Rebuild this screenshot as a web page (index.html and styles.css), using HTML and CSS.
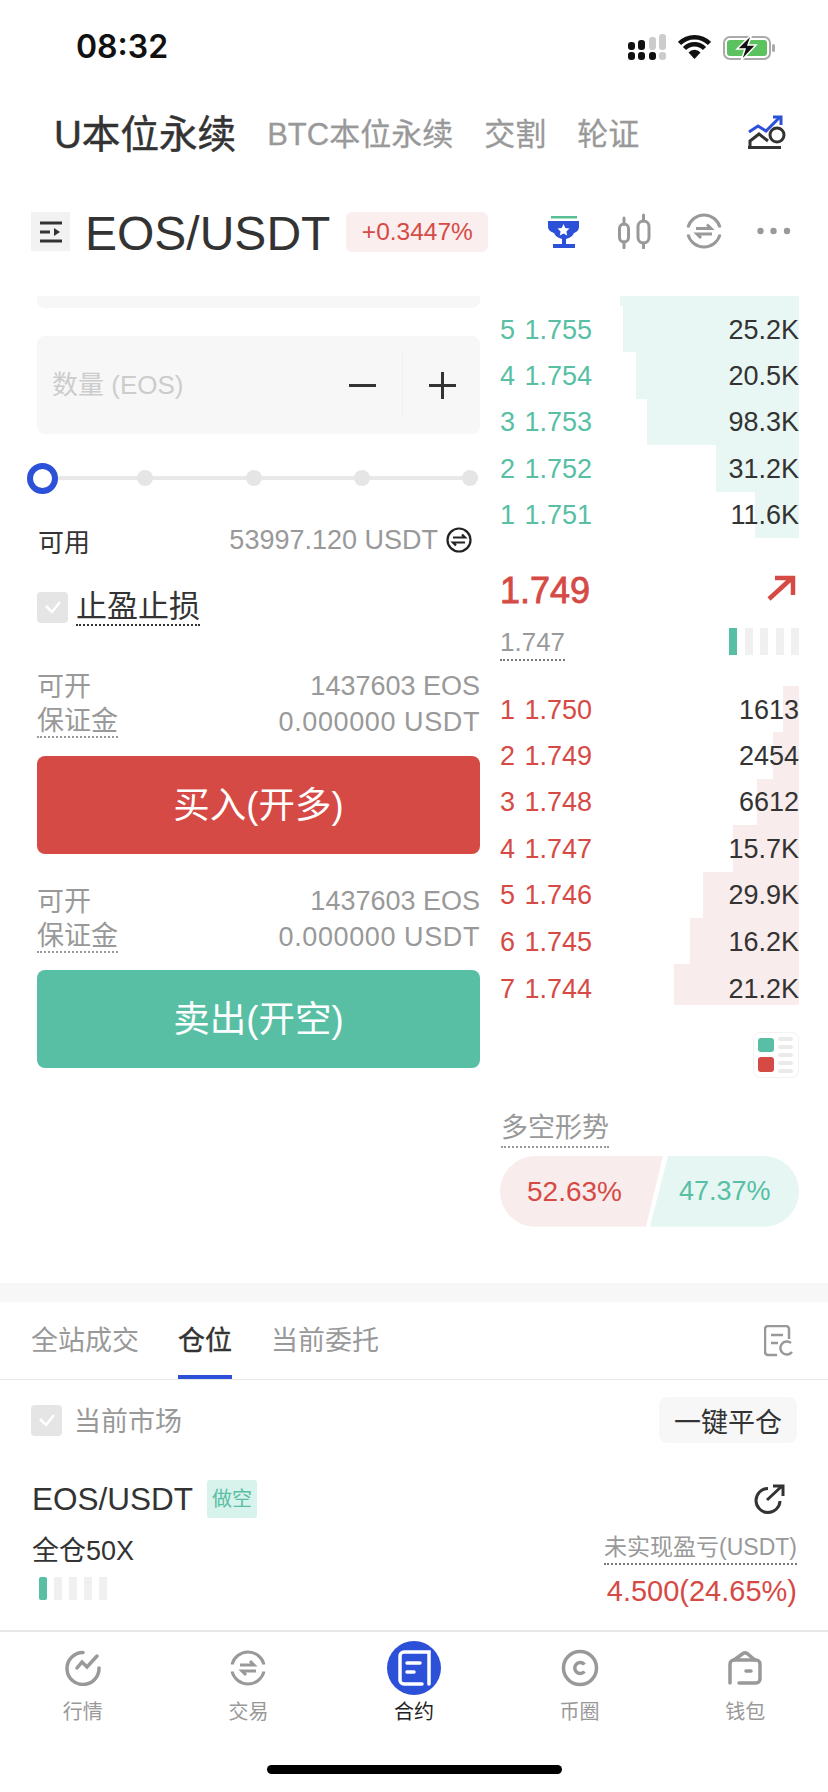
FILE: index.html
```html
<!DOCTYPE html>
<html lang="zh">
<head>
<meta charset="utf-8">
<title>EOS/USDT</title>
<link rel="stylesheet" href="styles.css">
</head>
<body>
<div class="page">
  <div class="status">
    <span class="time">08:32</span>
    <div class="status-icons">
      <svg width="38" height="26" viewBox="0 0 38 26"><g fill="#111"><rect x="0" y="8" width="7" height="8" rx="3"/><rect x="0" y="18" width="7" height="8" rx="3"/><rect x="10" y="6" width="7" height="10" rx="3"/><rect x="10" y="18" width="7" height="8" rx="3"/><rect x="21" y="18" width="7" height="8" rx="3"/></g><g fill="#ccc"><rect x="21" y="3" width="7" height="13" rx="3"/><rect x="31" y="0" width="7" height="16" rx="3"/><rect x="31" y="18" width="7" height="8" rx="3"/></g></svg>
      <svg width="33" height="25" viewBox="0 0 33 25"><path d="M1.500 9.500a21 21 0 0 1 30 0M6.500 14.500a14 14 0 0 1 20 0" fill="none" stroke="#111" stroke-width="4.500"/><path d="M10.500 18.500a8 8 0 0 1 12 0L16.500 25z" fill="#111"/></svg>
      <svg width="53" height="27" viewBox="0 0 53 27"><rect x="1" y="3" width="46" height="22" rx="6" fill="none" stroke="#aaa" stroke-width="2"/><rect x="4" y="6" width="40" height="16" rx="3" fill="#5cc25f"/><rect x="49" y="10" width="3" height="8" rx="1.500" fill="#aaa"/><path d="M29 0L14 15h8l-4 12 15-16h-8z" fill="#111" stroke="#fff" stroke-width="1.500"/></svg>
    </div>
  </div>

  <nav class="market-tabs">
    <span class="market-main">U本位永续</span>
    <span class="market-tab">BTC本位永续</span>
    <span class="market-tab">交割</span>
    <span class="market-tab">轮证</span>
    <svg class="market-icon" width="38" height="34" viewBox="0 0 38 34" fill="none"><path d="M1 17L10 11l8 5L32 2" stroke="#2d50d8" stroke-width="3"/><path d="M25 2h8v8" stroke="#2d50d8" stroke-width="3"/><path d="M2 32v-6l9-7 9 7" stroke="#333" stroke-width="3"/><path d="M0 32.500h25" stroke="#333" stroke-width="3"/><circle cx="29" cy="20" r="7" stroke="#333" stroke-width="3"/><path d="M25 32.500h8" stroke="#333" stroke-width="3"/></svg>
  </nav>

  <div class="symbol-row">
    <span class="menu-btn"><svg width="26" height="24" viewBox="0 0 26 24" fill="none" stroke="#333" stroke-width="3"><path d="M2 3h22M2 12h10M2 21h22"/><path d="M16 8l6 4-6 4z" fill="#333" stroke="none"/></svg></span>
    <span class="symbol">EOS/USDT</span>
    <span class="change">+0.3447%</span>
    <div class="symbol-tools">
      <svg width="34" height="36" viewBox="0 0 34 36"><rect x="3" y="3" width="26" height="2.500" fill="#58bf95"/><path d="M0 8h31v6c0 3-2 5-5 6-1 3-4 5-8 6v5h9v4H5v-4h9v-5c-4-1-7-3-8-6-3-1-6-3-6-6z" fill="#2d50d8"/><path d="M15.500 11l1.800 4 4.200.5-3.100 2.900.8 4.200-3.700-2.100-3.700 2.100.8-4.200-3.100-2.900 4.200-.5z" fill="#fff"/></svg>
      <svg width="34" height="36" viewBox="0 0 34 36" fill="none" stroke="#999" stroke-width="3" stroke-linecap="round"><rect x="2.500" y="11" width="9" height="18" rx="4.500"/><rect x="21" y="8" width="11" height="22" rx="5.500"/><path d="M7 5v6M7 29v6M26.500 2v6M26.500 30v5"/></svg>
      <svg width="36" height="36" viewBox="0 0 36 36" fill="none" stroke="#999" stroke-width="3"><path d="M2 14.500A16.500 16.500 0 0 1 34 14.500M34 21.500A16.500 16.500 0 0 1 2 21.500"/><path d="M10 15.500h15l-4-4M26 21H11l4 4"/></svg>
      <svg width="34" height="8" viewBox="0 0 34 8" fill="#999"><circle cx="3.500" cy="4" r="3.200"/><circle cx="16.500" cy="4" r="3.200"/><circle cx="30" cy="4" r="3.200"/></svg>
    </div>
  </div>

  <main class="trade">
    <section class="order-form">
      <div class="strip"></div>
      <div class="qty">
        <span class="qty-label">数量 (EOS)</span>
        <span class="qty-minus"></span>
        <span class="qty-sep"></span>
        <span class="qty-plus"></span>
      </div>
      <div class="slider">
        <span class="handle"></span>
        <span class="node"></span>
        <span class="node"></span>
        <span class="node"></span>
        <span class="node"></span>
      </div>
      <div class="avail">
        <span class="avail-label">可用</span>
        <span class="avail-value">53997.120 USDT
          <svg width="26" height="26" viewBox="0 0 26 26" fill="none" stroke="#222" stroke-width="2.200"><circle cx="13" cy="13" r="11.500"/><path d="M7 10.500h12l-3-3M19 15.500h-12l3 3"/></svg>
        </span>
      </div>
      <div class="tpsl">
        <span class="check"><svg width="20" height="16" viewBox="0 0 20 16" fill="none" stroke="#fff" stroke-width="2.500"><path d="M3 7l6 6 8-10"/></svg></span>
        <span class="tpsl-label">止盈止损</span>
      </div>
      <div class="stats stats-first">
        <div class="stat"><span class="stat-label">可开</span><span>1437603 EOS</span></div>
        <div class="stat"><span class="dotted">保证金</span><span class="zero">0.000000 USDT</span></div>
      </div>
      <button class="action buy">买入(开多)</button>
      <div class="stats stats-second">
        <div class="stat"><span class="stat-label">可开</span><span>1437603 EOS</span></div>
        <div class="stat"><span class="dotted">保证金</span><span class="zero">0.000000 USDT</span></div>
      </div>
      <button class="action sell">卖出(开空)</button>
    </section>

    <aside class="book">
      <div class="ask-stub"><i class="depth depth-ask" style="width:179px"></i></div>
      <div class="ask"><i class="depth depth-ask" style="width:176px"></i><span>5 1.755</span><b>25.2K</b></div>
      <div class="ask"><i class="depth depth-ask" style="width:163px"></i><span>4 1.754</span><b>20.5K</b></div>
      <div class="ask"><i class="depth depth-ask" style="width:152px"></i><span>3 1.753</span><b>98.3K</b></div>
      <div class="ask"><i class="depth depth-ask" style="width:83px"></i><span>2 1.752</span><b>31.2K</b></div>
      <div class="ask"><i class="depth depth-ask" style="width:44px"></i><span>1 1.751</span><b>11.6K</b></div>

      <div class="last">
        <span class="last-price">1.749</span>
        <svg width="30" height="28" viewBox="0 0 30 28" fill="none" stroke="#d64a45" stroke-width="4.500"><path d="M3 25L26 4M9 4h18v17"/></svg>
      </div>
      <div class="mark">
        <span class="mark-price">1.747</span>
        <div class="ticks"><i class="tick on"></i><i class="tick"></i><i class="tick"></i><i class="tick"></i><i class="tick"></i></div>
      </div>

      <div class="bids">
        <div class="bid"><i class="depth depth-bid" style="width:16px"></i><span>1 1.750</span><b>1613</b></div>
        <div class="bid"><i class="depth depth-bid" style="width:26px"></i><span>2 1.749</span><b>2454</b></div>
        <div class="bid"><i class="depth depth-bid" style="width:42px"></i><span>3 1.748</span><b>6612</b></div>
        <div class="bid"><i class="depth depth-bid" style="width:66px"></i><span>4 1.747</span><b>15.7K</b></div>
        <div class="bid"><i class="depth depth-bid" style="width:96px"></i><span>5 1.746</span><b>29.9K</b></div>
        <div class="bid"><i class="depth depth-bid" style="width:109px"></i><span>6 1.745</span><b>16.2K</b></div>
        <div class="bid bid-last"><i class="depth depth-bid" style="width:125px"></i><span>7 1.744</span><b>21.2K</b></div>
      </div>

      <div class="book-switch-wrap">
        <svg width="46" height="46" viewBox="0 0 46 46"><rect x=".5" y=".5" width="45" height="45" rx="7" fill="#fff" stroke="#f2f2f2"/><rect x="5" y="6" width="16" height="14" rx="3" fill="#58bfa4"/><rect x="5" y="25" width="16" height="15" rx="3" fill="#d64a45"/><g fill="#eaeaea"><rect x="25" y="5" width="15" height="4" rx="2"/><rect x="25" y="13" width="15" height="4" rx="2"/><rect x="25" y="21" width="15" height="4" rx="2"/><rect x="25" y="29" width="15" height="4" rx="2"/><rect x="25" y="37" width="15" height="4" rx="2"/></g></svg>
      </div>

      <div class="trend-title"><span class="dotted">多空形势</span></div>
      <div class="ratio">
        <span class="ratio-long">52.63%</span>
        <span class="ratio-short">47.37%</span>
      </div>
    </aside>
  </main>

  <div class="band"></div>

  <div class="list-tabs">
    <span class="list-tab">全站成交</span>
    <span class="list-tab active">仓位</span>
    <span class="list-tab">当前委托</span>
    <svg class="list-icon" width="30" height="32" viewBox="0 0 30 32" fill="none" stroke="#999" stroke-width="2.500"><path d="M13 30H4a3 3 0 0 1-3-3V4a3 3 0 0 1 3-3h18a3 3 0 0 1 3 3v10"/><path d="M7 10h12M7 18h7"/><path d="M27 18a6.500 6.500 0 1 0 1 9"/></svg>
  </div>

  <div class="filter">
    <span class="check"><svg width="20" height="16" viewBox="0 0 20 16" fill="none" stroke="#fff" stroke-width="2.500"><path d="M3 7l6 6 8-10"/></svg></span>
    <span class="filter-label">当前市场</span>
    <button class="close-all">一键平仓</button>
  </div>

  <section class="position">
    <div class="pos-head">
      <span class="pos-symbol">EOS/USDT</span>
      <span class="pos-tag">做空</span>
      <svg class="pos-share" width="32" height="30" viewBox="0 0 32 30" fill="none" stroke="#333" stroke-width="3"><path d="M15 4.500A12 12 0 1 0 27 17"/><path d="M14 16L29 2M20 2h10v10"/></svg>
    </div>
    <div class="pos-body">
      <div class="pos-left">
        <div class="pos-lev">全仓50X</div>
        <div class="pos-ticks"><i class="ptick on"></i><i class="ptick"></i><i class="ptick"></i><i class="ptick"></i><i class="ptick"></i></div>
      </div>
      <div class="pos-right">
        <span class="pnl-label">未实现盈亏(USDT)</span>
        <span class="pnl-value">4.500(24.65%)</span>
      </div>
    </div>
  </section>

  <footer class="tabbar">
    <div class="tab-item">
      <span class="tab-icon"><svg width="36" height="36" viewBox="0 0 36 36" fill="none" stroke="#999" stroke-width="3.500" stroke-linecap="round"><path d="M18 2.500A16 16 0 1 0 34 18"/><path d="M12 18l5-6 5 5 10-11"/></svg></span>
      <span class="tab-label">行情</span>
    </div>
    <div class="tab-item">
      <span class="tab-icon"><svg width="36" height="36" viewBox="0 0 36 36" fill="none" stroke="#999" stroke-width="3"><path d="M2 14.500A16.500 16.500 0 0 1 34 14.500M34 21.500A16.500 16.500 0 0 1 2 21.500"/><path d="M10 15h14l-4-4M26 21H12l4 4"/></svg></span>
      <span class="tab-label">交易</span>
    </div>
    <div class="tab-item">
      <span class="tab-icon tab-icon-active"><svg width="34" height="36" viewBox="0 0 34 36" fill="none" stroke="#fff" stroke-width="3.500" stroke-linecap="round"><path d="M32 34V2H7a4 4 0 0 0-4 4v24a4 4 0 0 0 4 4h18"/><path d="M10 13h13M10 22h7"/></svg></span>
      <span class="tab-label active">合约</span>
    </div>
    <div class="tab-item">
      <span class="tab-icon"><svg width="38" height="38" viewBox="0 0 38 38" fill="none" stroke="#999" stroke-width="3.500"><circle cx="19" cy="19" r="16.500"/><path d="M23.500 15.500a5.500 5.500 0 1 0 0 7"/></svg></span>
      <span class="tab-label">币圈</span>
    </div>
    <div class="tab-item">
      <span class="tab-icon"><svg width="34" height="34" viewBox="0 0 34 34" fill="none" stroke="#999" stroke-width="3.500" stroke-linecap="round"><path d="M2 32V13a4 4 0 0 1 4-4h22a4 4 0 0 1 4 4v15a4 4 0 0 1-4 4H11"/><path d="M6 9l9-6.500a3.500 3.500 0 0 1 4 0L27 9"/><path d="M18 20h5"/></svg></span>
      <span class="tab-label">钱包</span>
    </div>
  </footer>
  <div class="home-indicator"></div>
</div>
</body>
</html>
```
FILE: styles.css
```css
* { box-sizing: border-box; }
html, body { margin: 0; padding: 0; background: #fff; }
body { font-family: "Liberation Sans", "Noto Sans CJK SC", sans-serif; color: #333; }
.page { width: 828px; height: 1792px; overflow: hidden; display: flex; flex-direction: column; background: #fff; }
i { display: block; font-style: normal; }
b { font-weight: 400; }
button { font-family: inherit; border: 0; padding: 0; }
svg { display: block; flex: none; }

.status { height: 94px; flex: none; display: flex; justify-content: space-between; padding: 34px 52px 0 76px; }
.time { font-family: Inter, "Liberation Sans", sans-serif; font-weight: 600; font-size: 32px; line-height: 26px; color: #111; }
.status-icons { display: flex; align-items: flex-start; gap: 12px; }

.market-tabs { height: 78px; flex: none; display: flex; align-items: center; gap: 31px; padding: 4px 42px 0 54px; }
.market-main { font-size: 38.600px; color: #333; -webkit-text-stroke: .5px #333; line-height: 46px; }
.market-tab { font-size: 31px; color: #999; line-height: 40px; -webkit-text-stroke: .3px #999; }
.market-icon { margin-left: auto; margin-top: -6px; }

.symbol-row { height: 124px; flex: none; display: flex; align-items: flex-start; padding: 40px 37px 0 31px; }
.menu-btn { width: 39px; height: 39px; background: #f2f2f2; display: flex; align-items: center; justify-content: center; }
.symbol { font-size: 48px; line-height: 40px; margin-left: 15px; margin-top: 2px; color: #333; }
.change { width: 142px; height: 40px; margin-left: 16px; border-radius: 6px; background: #fbeeee; color: #d64a45; font-size: 24.500px; line-height: 40px; text-align: center; }
.symbol-tools { margin-left: auto; display: flex; align-items: center; gap: 35px; height: 36px; margin-top: 1px; }

.trade { height: 987px; flex: none; display: flex; gap: 20px; padding: 0 29px 0 37px; }
.order-form { width: 443px; flex: none; }
.strip { height: 12px; background: #f7f7f7; border-radius: 0 0 8px 8px; }
.qty { margin-top: 28px; height: 98px; background: #f7f7f7; border-radius: 8px; display: flex; align-items: center; padding: 0 24px 0 15px; }
.qty-label { font-size: 26px; color: #ccc; flex: 1; margin-bottom: 5px; }
.qty-minus { width: 27px; height: 3px; background: #333; }
.qty-sep { width: 1px; height: 66px; background: #efefef; margin: 0 26px; }
.qty-plus { width: 27px; height: 27px; background: linear-gradient(#333, #333) center / 27px 3px no-repeat, linear-gradient(#333, #333) center / 3px 27px no-repeat; }

.slider { margin: 29px 2px 0 -10px; height: 30px; display: flex; justify-content: space-between; align-items: center; background: linear-gradient(#e8e8e8, #e8e8e8) center / 100% 4px no-repeat; }
.handle { width: 31px; height: 31px; margin-right: -13px; border: 6px solid #2d50d8; border-radius: 50%; background: #fff; }
.node { width: 16px; height: 16px; background: #e5e5e5; border-radius: 50%; }

.avail { margin-top: 29px; height: 36px; display: flex; justify-content: space-between; align-items: center; }
.avail-label { font-size: 26px; line-height: 36px; color: #333; margin-top: 6px; margin-left: 1px; }
.avail-value { font-size: 27px; color: #999; display: flex; align-items: center; gap: 8px; padding-right: 8px; }

.tpsl { margin-top: 34px; height: 30px; display: flex; align-items: center; gap: 9px; }
.check { width: 31px; height: 31px; border-radius: 4px; background: #e5e5e5; display: flex; align-items: center; justify-content: center; flex: none; }
.tpsl-label { font-size: 31px; line-height: 34px; border-bottom: 2px dotted #333; color: #333; margin-top: 2px; margin-left: -1px; }

.stats-first { margin-top: 46px; }
.stats-second { margin-top: 29px; }
.stat { height: 36px; display: flex; justify-content: space-between; align-items: center; font-size: 27px; color: #999; }
.stat-label { margin-top: -4px; }
.zero { letter-spacing: .6px; }
.dotted { border-bottom: 2px dotted #999; line-height: 30px; display: inline-block; }

.action { display: block; width: 443px; height: 98px; padding-bottom: 6px; border-radius: 8px; color: #fff; font-size: 36.500px; text-align: center; }
.buy { margin-top: 16px; background: #d64a45; }
.sell { margin-top: 15px; background: #58bfa4; }

.book { width: 299px; flex: none; font-size: 27px; }
.ask-stub { height: 10px; position: relative; }
.ask, .bid { position: relative; display: flex; justify-content: space-between; align-items: center; height: 46.400px; }
.ask { color: #58bfa4; }
.bid { color: #d64a45; overflow: hidden; }
.bid-last { height: 40.500px; align-items: flex-start; line-height: 46.400px; }
.ask span, .bid span, .ask b, .bid b { position: relative; padding-top: 2px; }
.ask span, .bid span { word-spacing: 2px; }
.ask b, .bid b { color: #333; }
.depth { position: absolute; top: 0; right: 0; bottom: 0; }
.depth-ask { background: #e8f7f4; }
.depth-bid { background: #f9ecec; }

.last { margin-top: 30px; height: 44px; display: flex; justify-content: space-between; align-items: center; }
.last-price { font-size: 36px; margin-top: 3px; color: #d64a45; -webkit-text-stroke: .8px #d64a45; }
.last svg { margin-right: 3px; margin-top: -4px; }
.mark { margin-top: 12px; height: 36px; display: flex; justify-content: space-between; align-items: center; }
.mark-price { font-size: 26px; color: #999; line-height: 34px; border-bottom: 2px dotted #777; margin-top: 2px; }
.ticks, .pos-ticks { display: flex; }
.ticks { gap: 7.900px; height: 27px; }
.tick { width: 7.600px; background: #f0f0f0; }
.tick.on { background: #58bfa4; }
.bids { margin-top: 26px; }

.book-switch-wrap { margin-top: 27px; display: flex; justify-content: flex-end; }
.trend-title { margin-top: 33px; height: 36px; padding-left: 1px; color: #999; }
.trend-title .dotted { line-height: 35px; }
.ratio { margin-top: 9px; height: 71px; border-radius: 36px; overflow: hidden; display: flex; font-size: 28px; line-height: 71px; }
.ratio-long { width: 163px; flex: none; padding-left: 27px; background: #f9ecec; color: #d64a45; clip-path: polygon(0 0, 100% 0, calc(100% - 17px) 100%, 0 100%); }
.ratio-short { width: 149px; flex: none; margin-left: -13px; padding-left: 29px; font-size: 27px; background: #e5f6f3; color: #58bfa4; clip-path: polygon(18px 0, 100% 0, 100% 100%, 0 100%); }

.band { height: 19px; flex: none; background: #f7f7f7; }

.list-tabs { height: 78px; flex: none; display: flex; align-items: flex-start; gap: 39px; padding: 0 34px 0 31px; border-bottom: 1px solid #e8e8e8; }
.list-tab { height: 77px; font-size: 27px; color: #999; padding-top: 20px; line-height: 38px; border-bottom: 4px solid transparent; }
.list-tab.active { color: #333; -webkit-text-stroke: .4px #333; border-bottom-color: #2d50d8; }
.list-icon { margin-left: auto; margin-top: 23px; }

.filter { height: 78px; flex: none; display: flex; align-items: center; padding: 0 31px 0 31px; }
.filter .check { margin-top: 2px; }
.filter-label { font-size: 27px; color: #999; margin-left: 12px; flex: 1; }
.close-all { width: 138px; height: 46px; background: #f7f7f7; border-radius: 8px; font-size: 27px; color: #333; margin-top: 2px; }

.position { height: 173px; flex: none; padding: 22px 31px 0 32px; }
.pos-head { height: 38px; display: flex; align-items: center; }
.pos-symbol { font-size: 31.500px; color: #333; }
.pos-tag { width: 50px; height: 38px; margin-left: 14px; background: #d8f2ec; border-radius: 3px; color: #58bfa4; font-size: 20px; line-height: 38px; text-align: center; }
.pos-share { margin-left: auto; margin-right: 12px; }
.pos-body { display: flex; justify-content: space-between; margin-top: 13px; }
.pos-lev { margin-top: 2px; font-size: 27px; line-height: 36px; color: #333; }
.pos-ticks { margin: 8px 0 0 7px; height: 23px; gap: 7px; }
.ptick { width: 8px; background: #f0f0f0; }
.ptick.on { background: #58bfa4; border-radius: 2px; }
.pos-right { display: flex; flex-direction: column; align-items: flex-end; }
.pnl-label { font-size: 23px; color: #999; line-height: 32px; border-bottom: 2px dotted #777; }
.pnl-value { font-size: 29px; line-height: 36px; margin-top: 8px; color: #d64a45; }

.tabbar { flex: none; height: 135px; margin-top: -1px; border-top: 2px solid #e8e8e8; display: grid; grid-template-columns: repeat(5, 1fr); align-content: start; }
.tab-item { display: flex; flex-direction: column; align-items: center; padding-top: 9px; }
.tab-icon { width: 54px; height: 54px; display: flex; align-items: center; justify-content: center; }
.tab-icon-active { background: #2d50d8; border-radius: 50%; }
.tab-label { margin-top: 3px; font-size: 20px; line-height: 28px; color: #999; }
.tab-label.active { color: #222; }

.home-indicator { width: 295px; height: 9px; margin: 0 auto; background: #000; border-radius: 5px; flex: none; }
```
